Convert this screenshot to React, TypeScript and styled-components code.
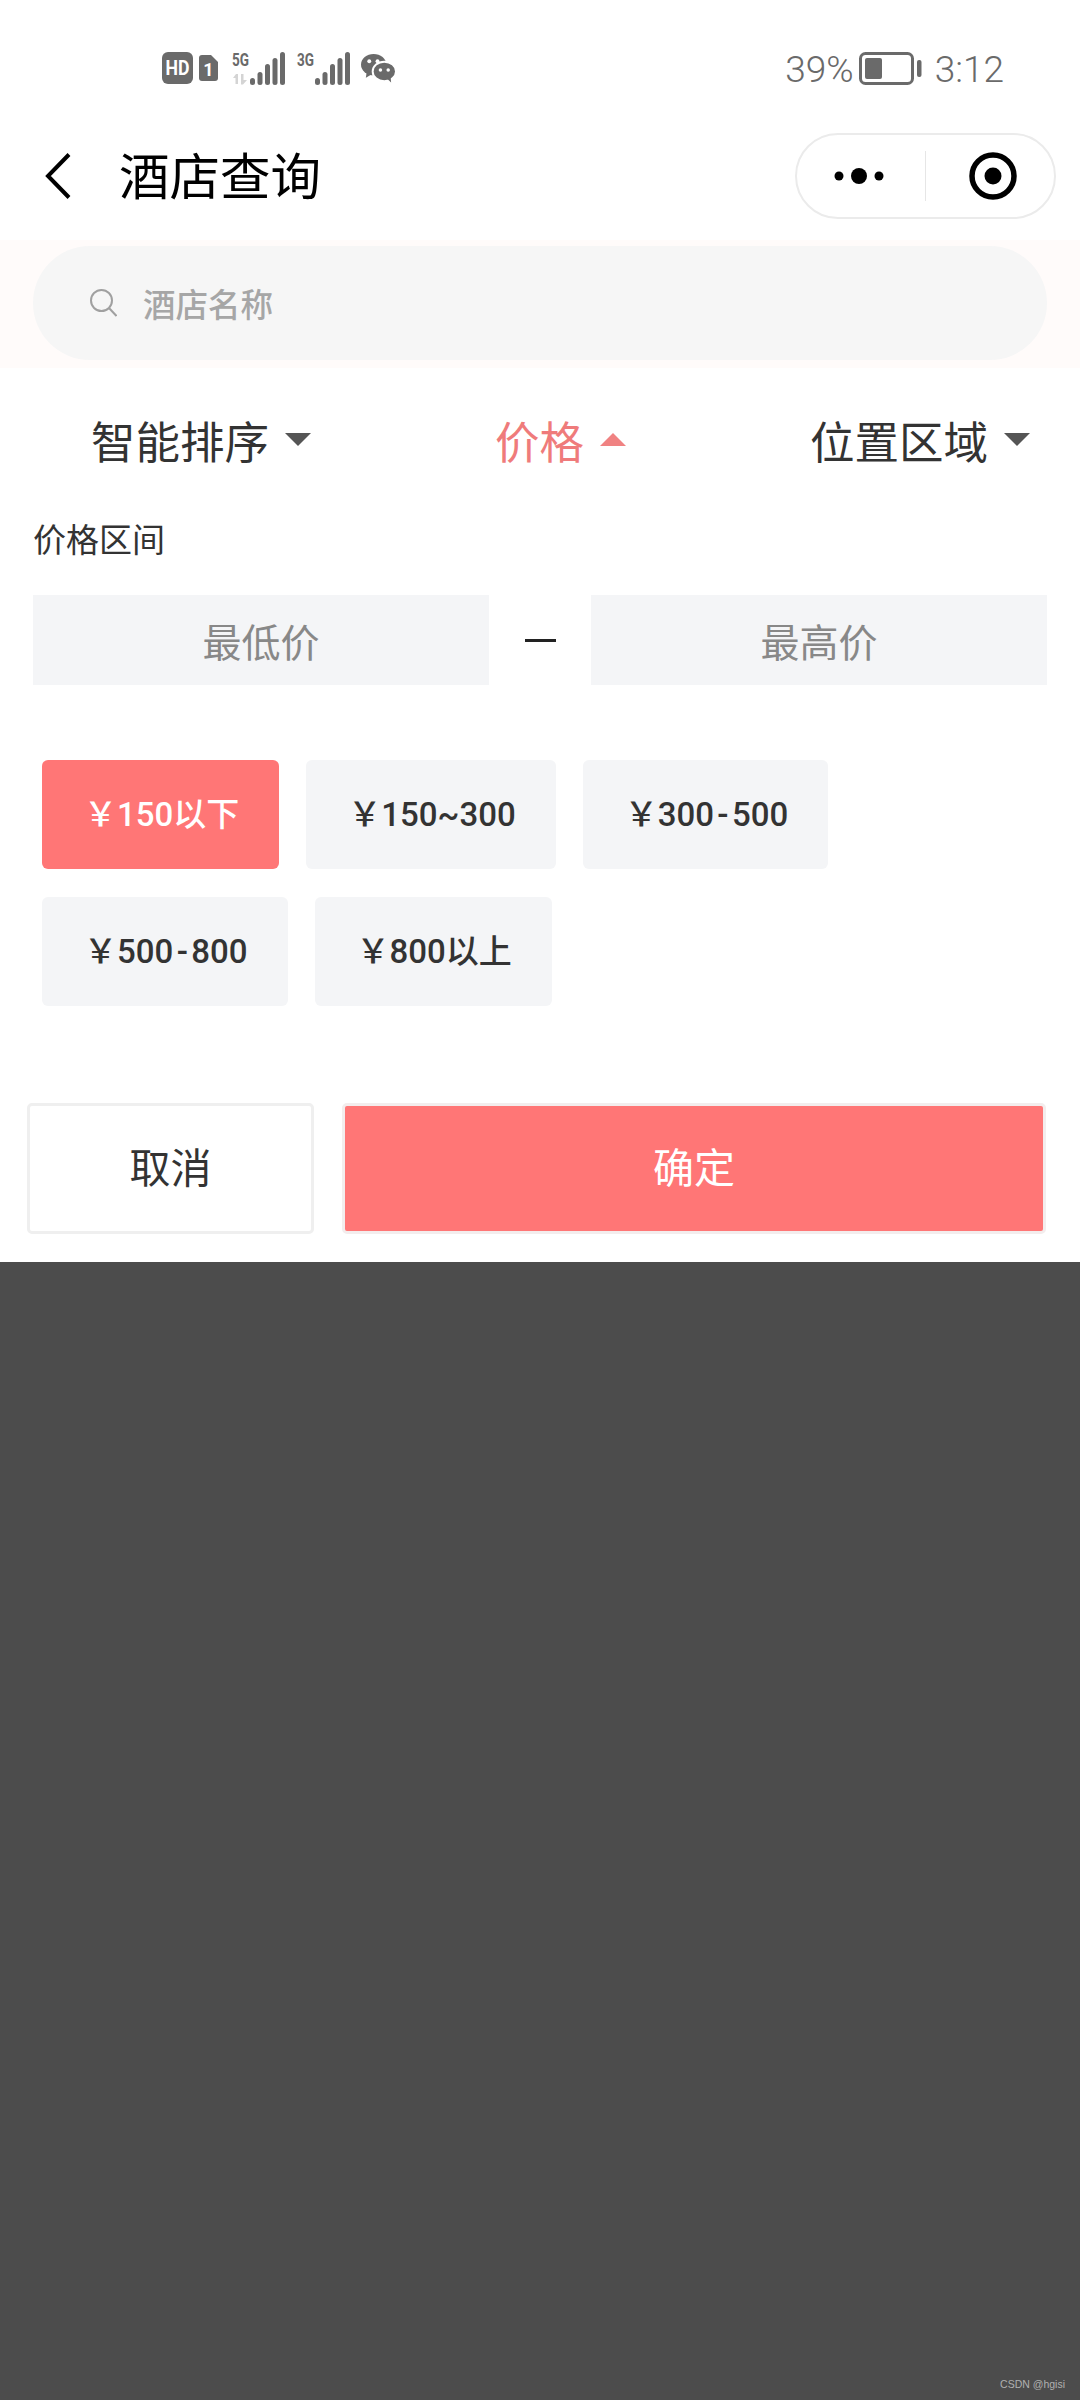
import React from 'react';
import styled, { createGlobalStyle } from 'styled-components';

const GlobalStyle = createGlobalStyle`
  html, body {
    margin: 0;
    padding: 0;
    background: #4c4c4c;
  }
  * {
    box-sizing: border-box;
  }
`;

const FONT = `Roboto, "Noto Sans CJK SC", sans-serif`;
const ACCENT = '#ff7676';

const Page = styled.div`
  display: flex;
  flex-direction: column;
  width: 1080px;
  height: 2400px;
  font-family: ${FONT};
  overflow: hidden;
`;

const Panel = styled.div`
  background: #fff;
  padding-bottom: 28px;
`;

const StatusBar = styled.div`
  display: flex;
  align-items: center;
  justify-content: space-between;
  height: 133px;
  padding: 3px 76px 0 162px;
  color: #6a6a6a;
`;

const StatusIcons = styled.div`
  display: flex;
  align-items: center;
`;

const StatusInfo = styled.div`
  display: flex;
  align-items: center;
  font-size: 37px;
  font-weight: 300;
`;

const Percent = styled.span`
  margin-right: 5px;
  padding-top: 3px;
`;

const Clock = styled.span`
  margin-left: 13px;
  padding-top: 3px;
`;

const NavBar = styled.div`
  display: flex;
  align-items: flex-start;
  height: 107px;
  padding: 0 24px 0 45px;
`;

const BackButton = styled.svg`
  width: 26px;
  height: 46px;
  margin-top: 20px;
`;

const Title = styled.h1`
  flex: 1;
  margin: 13px 0 0 48px;
  font-size: 50.5px;
  line-height: 64px;
  font-weight: 400;
  color: #000;
`;

const Capsule = styled.div`
  display: grid;
  grid-template-columns: 128px 1px 1fr;
  align-items: center;
  width: 261px;
  height: 86px;
  border: 2px solid #ebebeb;
  border-radius: 43px;
  background: #fff;
`;

const CapsuleSide = styled.div<{ $left?: number; $right?: number }>`
  display: flex;
  align-items: center;
  justify-content: center;
  padding: 0 ${props => props.$right ?? 0}px 0 ${props => props.$left ?? 0}px;
`;

const CapsuleDivider = styled.div`
  height: 50px;
  background: #e6e6e6;
`;

const SearchBand = styled.div`
  height: 128px;
  padding: 6px 33px 8px;
  background: #fffbfa;
`;

const SearchBar = styled.label`
  display: flex;
  align-items: center;
  height: 114px;
  padding-left: 57px;
  border-radius: 57px;
  background: #f6f6f6;
`;

const SearchInput = styled.input`
  flex: 1;
  margin-left: 26px;
  padding: 5px 0 0;
  border: 0;
  outline: 0;
  background: transparent;
  font-family: ${FONT};
  font-size: 32.5px;
  font-weight: 500;

  &::placeholder {
    color: #a6a6a6;
    opacity: 1;
  }
`;

const FilterTabs = styled.div`
  display: flex;
  align-items: center;
  justify-content: space-between;
  height: 144px;
  padding: 0 50px 2px 91px;
`;

const FilterTab = styled.div<{ $active?: boolean }>`
  display: flex;
  align-items: center;
  gap: 16px;
  font-size: 44.5px;
  color: ${props => (props.$active ? '#ef7b7b' : '#333')};
`;

const Caret = styled.span<{ $up?: boolean }>`
  width: 0;
  height: 0;
  border-left: 13px solid transparent;
  border-right: 13px solid transparent;
  border-top: ${props => (props.$up ? '0' : '13px solid #555')};
  border-bottom: ${props => (props.$up ? '13px solid #f08282' : '0')};
`;

const SectionLabel = styled.div`
  padding: 9px 0 0 33px;
  font-size: 33px;
  line-height: 40px;
  color: #333;
`;

const PriceRange = styled.div`
  display: flex;
  align-items: center;
  margin-top: 34px;
  padding: 0 33px;
`;

const PriceInput = styled.input`
  width: 456px;
  height: 90px;
  padding: 8px 0 0;
  border: 0;
  outline: 0;
  background: #f4f5f7;
  text-align: center;
  font-family: ${FONT};
  font-size: 39px;

  &::placeholder {
    color: #888;
    opacity: 1;
  }
`;

const RangeDash = styled.div`
  flex: 1;
  display: flex;
  justify-content: center;

  &::before {
    content: '';
    width: 31px;
    height: 3px;
    background: #222;
  }
`;

const ChipList = styled.div`
  display: flex;
  flex-wrap: wrap;
  gap: 28px 27px;
  margin-top: 75px;
  padding: 0 33px 0 42px;
`;

const Chip = styled.div<{ $active?: boolean }>`
  display: flex;
  align-items: center;
  height: 109px;
  padding: 0 40px 5px 42px;
  border-radius: 6px;
  font-size: 33px;
  font-weight: 500;
  background: ${props => (props.$active ? ACCENT : '#f4f5f7')};
  color: ${props => (props.$active ? '#fff' : '#333')};
`;

const ActionRow = styled.div`
  display: flex;
  gap: 28px;
  margin-top: 97px;
  padding: 0 34px 0 27px;
`;

const ActionButton = styled.button<{ $primary?: boolean }>`
  flex: ${props => (props.$primary ? '1' : '0 0 287px')};
  height: 131px;
  padding: 0 0 7px;
  border: 3px solid ${props => (props.$primary ? '#f3eded' : '#efefef')};
  border-radius: 5px;
  background: ${props => (props.$primary ? ACCENT : '#fff')};
  color: ${props => (props.$primary ? '#fff' : '#333')};
  font-family: ${FONT};
  font-size: 41px;
`;

const Mask = styled.div`
  flex: 1;
  display: flex;
  align-items: flex-end;
  justify-content: flex-end;
  padding: 0 15px 10px 0;
  background: #4c4c4c;
`;

const Watermark = styled.span`
  font-family: "Liberation Sans", sans-serif;
  font-size: 10.5px;
  color: #b0b0b0;
`;

const SignalIcon = styled.svg<{ $gap: number }>`
  margin-left: ${props => props.$gap}px;
  overflow: visible;
`;

const HdBadge = () => (
  <svg width="31" height="32" viewBox="0 0 31 32">
    <rect width="31" height="32" rx="6" fill="#6a6a6a" />
    <text x="3.5" y="23" fontFamily="Roboto" fontWeight="700" fontSize="20" fill="#fff" textLength="24" lengthAdjust="spacingAndGlyphs">HD</text>
  </svg>
);

const SimBadge = () => (
  <SignalIcon $gap={6} width="19" height="26" viewBox="0 0 19 26">
    <path d="M3 0h9l7 7v16a3 3 0 0 1-3 3H3a3 3 0 0 1-3-3V3a3 3 0 0 1 3-3z" fill="#6a6a6a" />
    <text x="9.5" y="20.5" textAnchor="middle" fontFamily="Roboto" fontWeight="700" fontSize="18" fill="#fff">1</text>
  </SignalIcon>
);

// net label above, optional traffic arrows, then five rising bars
const BAR_TOPS = [26, 20, 12, 6, 0];

const Signal = ({ net, traffic, gap }: { net: string; traffic?: boolean; gap: number }) => (
  <SignalIcon $gap={gap} width="53" height="33" viewBox="0 0 53 33">
    <text x="0" y="14" fontFamily="Roboto" fontWeight="700" fontSize="18" fill="#6a6a6a" textLength="17" lengthAdjust="spacingAndGlyphs">{net}</text>
    {traffic && <path d="M1 26l3-4h2v10H3.5v-6zM9 22h2.5v6H15l-4 4.5H9z" fill="#d4d4d4" />}
    {BAR_TOPS.map((top, i) => (
      <rect key={i} x={18 + i * 7.5} y={top} width="5" height={33 - top} rx="2.5" fill="#6a6a6a" />
    ))}
  </SignalIcon>
);

const WechatGlyph = () => (
  <SignalIcon $gap={11} width="34" height="30" viewBox="0 0 35 30">
    <ellipse cx="13" cy="11.5" rx="13" ry="11" fill="#6a6a6a" />
    <path d="M6 18l-1 7 7-4z" fill="#6a6a6a" />
    <circle cx="8.5" cy="8" r="2" fill="#fff" />
    <circle cx="17" cy="8" r="2" fill="#fff" />
    <ellipse cx="24" cy="18.5" rx="12" ry="10" fill="#6a6a6a" stroke="#fff" strokeWidth="2" />
    <path d="M27 26l4 4-.5-6z" fill="#6a6a6a" />
    <circle cx="20" cy="17" r="1.8" fill="#fff" />
    <circle cx="28" cy="17" r="1.8" fill="#fff" />
  </SignalIcon>
);

const Battery = () => (
  <svg width="63" height="33" viewBox="0 0 63 33">
    <rect x="1.5" y="1.5" width="52" height="30" rx="5" fill="none" stroke="#6a6a6a" strokeWidth="3" />
    <rect x="6" y="6" width="17" height="21" rx="2" fill="#6a6a6a" />
    <rect x="58" y="8" width="4.5" height="17" rx="2" fill="#6a6a6a" />
  </svg>
);

const SearchGlyph = () => (
  <svg width="27" height="28" viewBox="0 0 27 28" fill="none" stroke="#a0a0a0" strokeWidth="2">
    <circle cx="11.5" cy="11.5" r="10.5" />
    <path d="M19 19l7.5 8" />
  </svg>
);

// hair spaces keep the hyphen as open as it is set in these labels
const PRICE_OPTIONS = ['￥150以下', '￥150~300', '￥300\u200a-\u200a500', '￥500\u200a-\u200a800', '￥800以上'];

export default function App() {
  return (
    <Page>
      <GlobalStyle />
      <Panel>
        <StatusBar>
          <StatusIcons>
            <HdBadge />
            <SimBadge />
            <Signal net="5G" traffic gap={14} />
            <Signal net="3G" gap={12} />
            <WechatGlyph />
          </StatusIcons>
          <StatusInfo>
            <Percent>39%</Percent>
            <Battery />
            <Clock>3:12</Clock>
          </StatusInfo>
        </StatusBar>

        <NavBar>
          <BackButton viewBox="0 0 26 46" fill="none" stroke="#000" strokeWidth="4">
            <path d="M24 1.5L3 23l21 21.5" />
          </BackButton>
          <Title>酒店查询</Title>
          <Capsule>
            <CapsuleSide $right={4}>
              <svg width="50" height="16" viewBox="0 0 50 16">
                <circle cx="5" cy="8" r="4.5" fill="#000" />
                <circle cx="25" cy="8" r="8" fill="#000" />
                <circle cx="45" cy="8" r="4.5" fill="#000" />
              </svg>
            </CapsuleSide>
            <CapsuleDivider />
            <CapsuleSide $left={6}>
              <svg width="48" height="48" viewBox="0 0 48 48">
                <circle cx="24" cy="24" r="21" fill="none" stroke="#000" strokeWidth="5.5" />
                <circle cx="24" cy="24" r="8.5" fill="#000" />
              </svg>
            </CapsuleSide>
          </Capsule>
        </NavBar>

        <SearchBand>
          <SearchBar>
            <SearchGlyph />
            <SearchInput placeholder="酒店名称" />
          </SearchBar>
        </SearchBand>

        <FilterTabs>
          <FilterTab>智能排序<Caret /></FilterTab>
          <FilterTab $active>价格<Caret $up /></FilterTab>
          <FilterTab>位置区域<Caret /></FilterTab>
        </FilterTabs>

        <SectionLabel>价格区间</SectionLabel>
        <PriceRange>
          <PriceInput placeholder="最低价" />
          <RangeDash />
          <PriceInput placeholder="最高价" />
        </PriceRange>

        <ChipList>
          {PRICE_OPTIONS.map((label, i) => (
            <Chip key={label} $active={i === 0}>{label}</Chip>
          ))}
        </ChipList>

        <ActionRow>
          <ActionButton>取消</ActionButton>
          <ActionButton $primary>确定</ActionButton>
        </ActionRow>
      </Panel>
      <Mask>
        <Watermark>CSDN @hgisi</Watermark>
      </Mask>
    </Page>
  );
}
